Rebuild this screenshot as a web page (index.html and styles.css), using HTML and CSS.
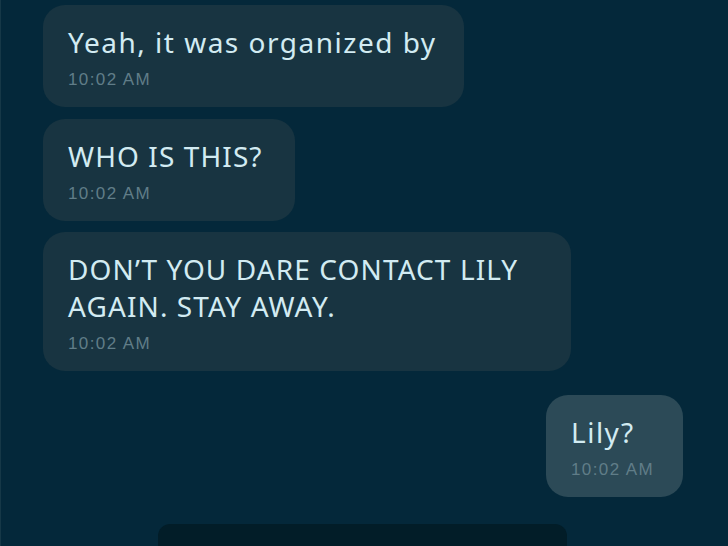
FILE: index.html
```html
<!DOCTYPE html>
<html>
<head>
<meta charset="utf-8">
<link rel="stylesheet" href="styles.css">
</head>
<body>
<div class="chat">
  <div class="msg in b1">
    <div class="text lower">Yeah, it was organized by</div>
    <div class="time">10:02 AM</div>
  </div>
  <div class="msg in b2">
    <div class="text">WHO IS THIS?</div>
    <div class="time">10:02 AM</div>
  </div>
  <div class="msg in b3">
    <div class="text">DON’T YOU DARE CONTACT LILY<br>AGAIN. STAY AWAY.</div>
    <div class="time">10:02 AM</div>
  </div>
  <div class="msg out b4">
    <div class="text lower">Lily?</div>
    <div class="time">10:02 AM</div>
  </div>
</div>
<div class="composer"></div>
</body>
</html>
```
FILE: styles.css
```css
html, body {
  margin: 0;
  padding: 0;
  width: 728px;
  height: 546px;
  overflow: hidden;
  background: #04283a;
}
body {
  position: relative;
  border-left: 1px solid #163847;
  box-sizing: border-box;
  font-family: "Noto Sans", sans-serif;
}
.chat {
  display: flex;
  flex-direction: column;
  align-items: flex-start;
  padding: 5px 0 0 42px;
}
.msg {
  box-sizing: border-box;
  border-radius: 22px;
  padding: 19px 25px 15px 25px;
  background: #183441;
  color: #d2ebf2;
}
.msg.out {
  align-self: flex-end;
  margin-right: 45px;
  background: #2c4a57;
}
.text {
  font-size: 28px;
  line-height: 37px;
  letter-spacing: 1.1px;
}
.text.lower {
  letter-spacing: 1.5px;
}
.time {
  font-family: "Liberation Sans", Arial, sans-serif;
  font-size: 17px;
  letter-spacing: 1.4px;
  line-height: 24px;
  color: #607d88;
  margin-top: 7px;
}
.b1 { width: 421px; }
.b2 { width: 252px; margin-top: 12px; }
.b3 { width: 528px; margin-top: 11px; }
.b4 { width: 137px; margin-top: 24px; }
.composer {
  position: absolute;
  left: 157px;
  top: 524px;
  width: 409px;
  height: 40px;
  background: #021d28;
  border-radius: 12px 12px 0 0;
}
```
